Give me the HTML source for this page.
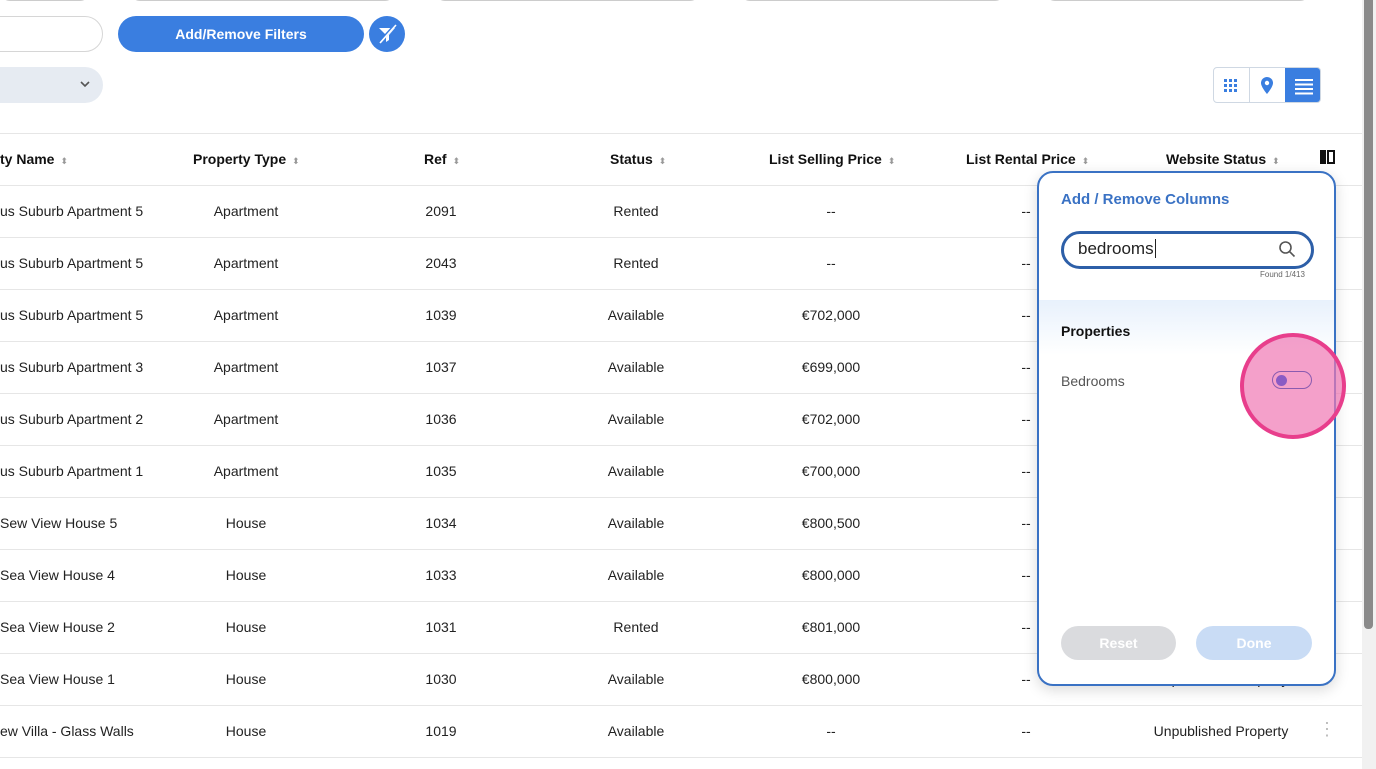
<!DOCTYPE html>
<html><head><style>
*{margin:0;padding:0;box-sizing:border-box}
body{width:1376px;height:769px;overflow:hidden;background:#fff;font-family:"Liberation Sans",sans-serif;position:relative;color:#222}
.abs{position:absolute}
.th{position:absolute;top:151px;font-size:14px;font-weight:bold;color:#111;white-space:nowrap}
.sort{color:#999;font-size:9px;margin-left:6px;font-weight:normal}
.row{position:absolute;left:0;width:1362px;height:52px;border-bottom:1px solid #e6e6e6}
.c{position:absolute;top:17px;font-size:14px;color:#222;white-space:nowrap;transform:translateX(-50%)}
</style></head><body>
<div class="abs" style="left:0;top:-20px;width:90px;height:21px;border:1px solid #ccc;border-radius:10px"></div>
<div class="abs" style="left:130px;top:-20px;width:265px;height:21px;border:1px solid #ccc;border-radius:10px"></div>
<div class="abs" style="left:435px;top:-20px;width:265px;height:21px;border:1px solid #ccc;border-radius:10px"></div>
<div class="abs" style="left:740px;top:-20px;width:265px;height:21px;border:1px solid #ccc;border-radius:10px"></div>
<div class="abs" style="left:1045px;top:-20px;width:265px;height:21px;border:1px solid #ccc;border-radius:10px"></div>

<div class="abs" style="left:-30px;top:16px;width:133px;height:36px;border:1px solid #d6d6d6;border-radius:18px"></div>
<div class="abs" style="left:118px;top:16px;width:246px;height:36px;background:#3a7ee0;border-radius:18px;color:#fff;font-weight:bold;font-size:14px;text-align:center;line-height:36px">Add/Remove Filters</div>
<div class="abs" style="left:369px;top:16px;width:36px;height:36px;background:#3a7ee0;border-radius:50%">
<svg width="36" height="36" viewBox="0 0 36 36"><path d="M10 12h16l-6 7v5l-3 2v-7z" fill="#fff"/><path d="M26 9L10 27" stroke="#3a7ee0" stroke-width="3"/><path d="M27 9L11 27" stroke="#fff" stroke-width="1.6"/></svg></div>
<div class="abs" style="left:-30px;top:67px;width:133px;height:36px;background:#e6ebf2;border-radius:18px"></div>
<svg class="abs" style="left:80px;top:80px" width="10" height="8"><path d="M1 2l4 4 4-4" stroke="#555" stroke-width="1.6" fill="none"/></svg>

<div class="abs" style="left:1213px;top:67px;width:108px;height:36px;border:1px solid #cfd8e3;border-radius:4px;overflow:hidden">
<div class="abs" style="left:35px;top:0;width:1px;height:36px;background:#cfd8e3"></div>
<div class="abs" style="left:71px;top:-1px;width:37px;height:36px;background:#3a7ee0"></div>
<svg class="abs" style="left:9px;top:9px" width="18" height="18"><g fill="#3a7ee0"><rect x="1" y="2" width="3" height="3"/><rect x="6" y="2" width="3" height="3"/><rect x="11" y="2" width="3" height="3"/><rect x="1" y="7" width="3" height="3"/><rect x="6" y="7" width="3" height="3"/><rect x="11" y="7" width="3" height="3"/><rect x="1" y="12" width="3" height="3"/><rect x="6" y="12" width="3" height="3"/><rect x="11" y="12" width="3" height="3"/></g></svg>
<svg class="abs" style="left:45px;top:8px" width="16" height="20"><path d="M8 1a6 6 0 0 1 6 6c0 4-6 11-6 11S2 11 2 7a6 6 0 0 1 6-6z" fill="#3a7ee0"/><circle cx="8" cy="7" r="2.2" fill="#fff"/></svg>
<svg class="abs" style="left:80px;top:9px" width="20" height="18"><g fill="#fff"><rect x="1" y="2" width="18" height="2"/><rect x="1" y="6.5" width="18" height="2"/><rect x="1" y="11" width="18" height="2"/><rect x="1" y="15.5" width="18" height="2"/></g></svg>
</div>

<div class="abs" style="left:0;top:133px;width:1362px;height:1px;background:#e6e6e6"></div>
<div class="abs" style="left:0;top:185px;width:1362px;height:1px;background:#e6e6e6"></div>
<div class="th" style="left:0">ty Name<span class="sort">⬍</span></div>
<div class="th" style="left:193px">Property Type<span class="sort">⬍</span></div>
<div class="th" style="left:424px">Ref<span class="sort">⬍</span></div>
<div class="th" style="left:610px">Status<span class="sort">⬍</span></div>
<div class="th" style="left:769px">List Selling Price<span class="sort">⬍</span></div>
<div class="th" style="left:966px">List Rental Price<span class="sort">⬍</span></div>
<div class="th" style="left:1166px">Website Status<span class="sort">⬍</span></div>
<div class="abs" style="left:1320px;top:150px;width:6px;height:14px;background:#111"></div>
<div class="abs" style="left:1327px;top:150px;width:8px;height:14px;border:2px solid #111"></div>

<div class="row" style="top:186px"><span class="c" style="left:0;transform:none">us Suburb Apartment 5</span><span class="c" style="left:246px">Apartment</span><span class="c" style="left:441px">2091</span><span class="c" style="left:636px">Rented</span><span class="c" style="left:831px">--</span><span class="c" style="left:1026px">--</span></div>
<div class="row" style="top:238px"><span class="c" style="left:0;transform:none">us Suburb Apartment 5</span><span class="c" style="left:246px">Apartment</span><span class="c" style="left:441px">2043</span><span class="c" style="left:636px">Rented</span><span class="c" style="left:831px">--</span><span class="c" style="left:1026px">--</span></div>
<div class="row" style="top:290px"><span class="c" style="left:0;transform:none">us Suburb Apartment 5</span><span class="c" style="left:246px">Apartment</span><span class="c" style="left:441px">1039</span><span class="c" style="left:636px">Available</span><span class="c" style="left:831px">€702,000</span><span class="c" style="left:1026px">--</span></div>
<div class="row" style="top:342px"><span class="c" style="left:0;transform:none">us Suburb Apartment 3</span><span class="c" style="left:246px">Apartment</span><span class="c" style="left:441px">1037</span><span class="c" style="left:636px">Available</span><span class="c" style="left:831px">€699,000</span><span class="c" style="left:1026px">--</span></div>
<div class="row" style="top:394px"><span class="c" style="left:0;transform:none">us Suburb Apartment 2</span><span class="c" style="left:246px">Apartment</span><span class="c" style="left:441px">1036</span><span class="c" style="left:636px">Available</span><span class="c" style="left:831px">€702,000</span><span class="c" style="left:1026px">--</span></div>
<div class="row" style="top:446px"><span class="c" style="left:0;transform:none">us Suburb Apartment 1</span><span class="c" style="left:246px">Apartment</span><span class="c" style="left:441px">1035</span><span class="c" style="left:636px">Available</span><span class="c" style="left:831px">€700,000</span><span class="c" style="left:1026px">--</span></div>
<div class="row" style="top:498px"><span class="c" style="left:0;transform:none">Sew View House 5</span><span class="c" style="left:246px">House</span><span class="c" style="left:441px">1034</span><span class="c" style="left:636px">Available</span><span class="c" style="left:831px">€800,500</span><span class="c" style="left:1026px">--</span></div>
<div class="row" style="top:550px"><span class="c" style="left:0;transform:none">Sea View House 4</span><span class="c" style="left:246px">House</span><span class="c" style="left:441px">1033</span><span class="c" style="left:636px">Available</span><span class="c" style="left:831px">€800,000</span><span class="c" style="left:1026px">--</span></div>
<div class="row" style="top:602px"><span class="c" style="left:0;transform:none">Sea View House 2</span><span class="c" style="left:246px">House</span><span class="c" style="left:441px">1031</span><span class="c" style="left:636px">Rented</span><span class="c" style="left:831px">€801,000</span><span class="c" style="left:1026px">--</span></div>
<div class="row" style="top:654px"><span class="c" style="left:0;transform:none">Sea View House 1</span><span class="c" style="left:246px">House</span><span class="c" style="left:441px">1030</span><span class="c" style="left:636px">Available</span><span class="c" style="left:831px">€800,000</span><span class="c" style="left:1026px">--</span><span class="c" style="left:1221px">Unpublished Property</span><span class="c" style="left:1327px;color:#bbb;top:13px;font-size:18px">⋮</span></div>
<div class="row" style="top:706px"><span class="c" style="left:0;transform:none">ew Villa - Glass Walls</span><span class="c" style="left:246px">House</span><span class="c" style="left:441px">1019</span><span class="c" style="left:636px">Available</span><span class="c" style="left:831px">--</span><span class="c" style="left:1026px">--</span><span class="c" style="left:1221px">Unpublished Property</span><span class="c" style="left:1327px;color:#bbb;top:13px;font-size:18px">⋮</span></div>

<div class="abs" style="left:1362px;top:0;width:14px;height:769px;background:#f1f1f1"></div>
<div class="abs" style="left:1364px;top:0;width:9px;height:629px;background:#8a8a8a;border-radius:0 0 4px 4px"></div>

<div class="abs" style="left:1037px;top:171px;width:299px;height:515px;background:#fff;border:2px solid #3a72c4;border-radius:16px;box-shadow:0 4px 14px rgba(0,0,0,.15);overflow:hidden">
<div class="abs" style="left:22px;top:18px;font-size:15px;font-weight:bold;color:#3a72c4">Add / Remove Columns</div>
<div class="abs" style="left:22px;top:58px;width:253px;height:38px;border:3px solid #2d5fa8;border-radius:19px"></div>
<div class="abs" style="left:39px;top:66px;font-size:17px;color:#222">bedrooms<span style="border-left:1px solid #222;margin-left:1px"></span></div>
<svg class="abs" style="left:239px;top:67px" width="18" height="18"><circle cx="7.5" cy="7.5" r="5.5" stroke="#555" stroke-width="1.6" fill="none"/><path d="M11.5 11.5l5 5" stroke="#555" stroke-width="1.6"/></svg>
<div class="abs" style="left:221px;top:97px;font-size:8px;color:#666">Found 1/413</div>
<div class="abs" style="left:0;top:127px;width:299px;height:55px;background:linear-gradient(#e8f1fc,#fff)"></div>
<div class="abs" style="left:22px;top:150px;font-size:14px;font-weight:bold;color:#111">Properties</div>
<div class="abs" style="left:22px;top:200px;font-size:14px;color:#555">Bedrooms</div>
<div class="abs" style="left:22px;top:453px;width:115px;height:34px;background:#dadbde;border-radius:17px;color:#fff;font-weight:bold;font-size:14px;text-align:center;line-height:34px">Reset</div>
<div class="abs" style="left:157px;top:453px;width:116px;height:34px;background:#c9dcf5;border-radius:17px;color:#fff;font-weight:bold;font-size:14px;text-align:center;line-height:34px">Done</div>
</div>
<div class="abs" style="left:1240px;top:333px;width:106px;height:106px;border-radius:50%;background:rgba(240,120,180,.7);border:4px solid #e83e8c"></div>
<div class="abs" style="left:1272px;top:371px;width:40px;height:18px;border:1.5px solid #8a5bb0;border-radius:9px"></div>
<div class="abs" style="left:1276px;top:375px;width:11px;height:11px;border-radius:50%;background:#8a5bc4"></div>
</body></html>
